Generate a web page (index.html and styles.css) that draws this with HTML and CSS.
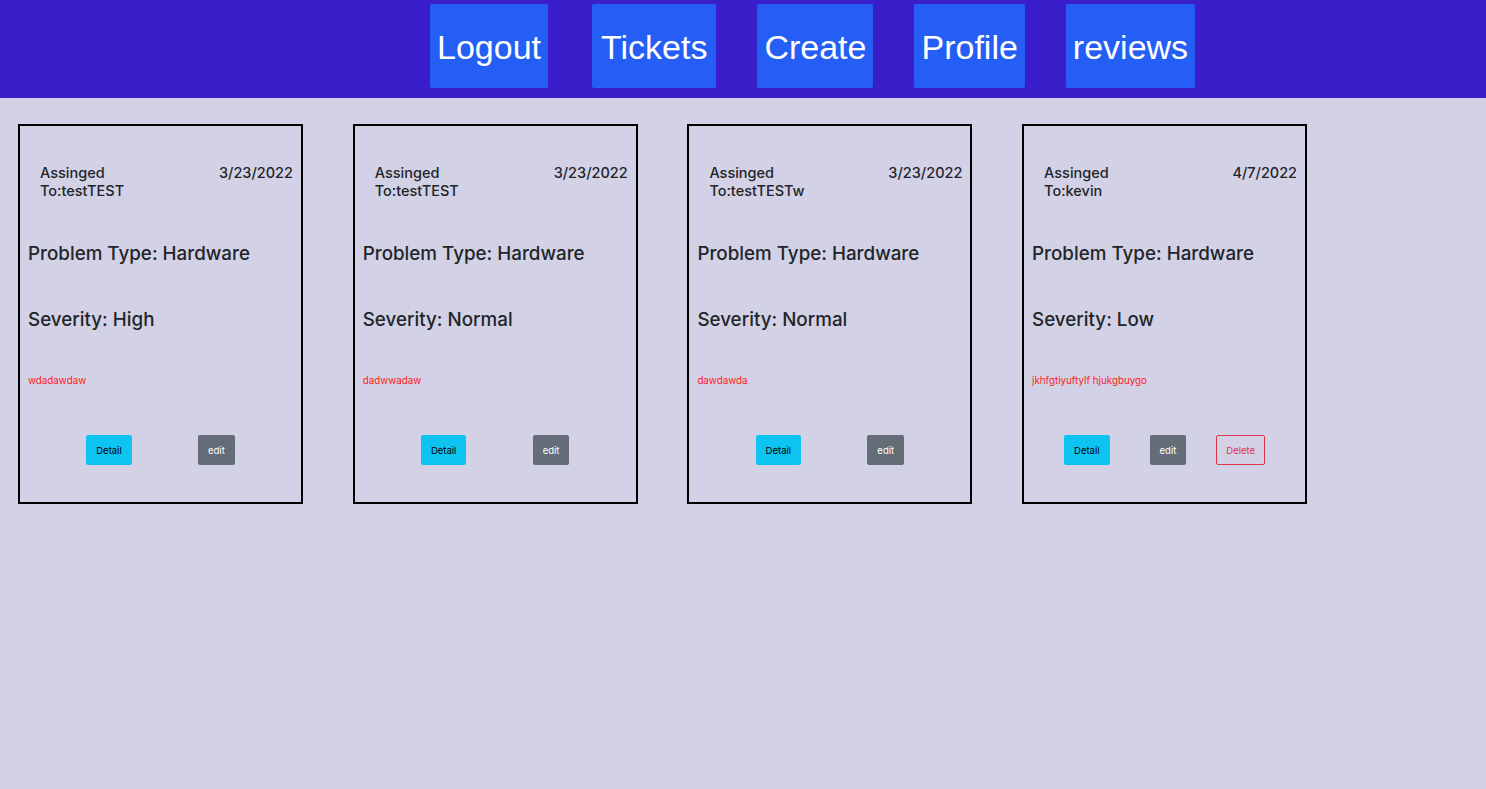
FILE: index.html
```html
<!DOCTYPE html>
<html>
<head>
<meta charset="utf-8">
<link rel="stylesheet" href="styles.css">
</head>
<body>
<nav class="nav">
  <a class="nav-btn">Logout</a>
  <a class="nav-btn nav-wide">Tickets</a>
  <a class="nav-btn">Create</a>
  <a class="nav-btn">Profile</a>
  <a class="nav-btn">reviews</a>
</nav>
<main class="cards">
  <div class="card">
    <div class="card-head"><span class="assigned">Assinged To:testTEST</span><span class="date">3/23/2022</span></div>
    <h4 class="field">Problem Type: Hardware</h4>
    <h4 class="field sev">Severity: High</h4>
    <p class="desc">wdadawdaw</p>
    <div class="actions"><button class="btn btn-info">Detail</button><button class="btn btn-sec">edit</button></div>
  </div>
  <div class="card">
    <div class="card-head"><span class="assigned">Assinged To:testTEST</span><span class="date">3/23/2022</span></div>
    <h4 class="field">Problem Type: Hardware</h4>
    <h4 class="field sev">Severity: Normal</h4>
    <p class="desc">dadwwadaw</p>
    <div class="actions"><button class="btn btn-info">Detail</button><button class="btn btn-sec">edit</button></div>
  </div>
  <div class="card">
    <div class="card-head"><span class="assigned">Assinged To:testTESTw</span><span class="date">3/23/2022</span></div>
    <h4 class="field">Problem Type: Hardware</h4>
    <h4 class="field sev">Severity: Normal</h4>
    <p class="desc">dawdawda</p>
    <div class="actions"><button class="btn btn-info">Detail</button><button class="btn btn-sec">edit</button></div>
  </div>
  <div class="card">
    <div class="card-head"><span class="assigned">Assinged To:kevin</span><span class="date">4/7/2022</span></div>
    <h4 class="field">Problem Type: Hardware</h4>
    <h4 class="field sev">Severity: Low</h4>
    <p class="desc">jkhfgtiyuftylf hjukgbuygo</p>
    <div class="actions"><button class="btn btn-info">Detail</button><button class="btn btn-sec">edit</button><button class="btn btn-del">Delete</button></div>
  </div>
</main>
</body>
</html>
```
FILE: styles.css
```css
* { box-sizing: border-box; }
html, body { margin: 0; padding: 0; }
body {
  background: #d3d1e6;
  font-family: Inter, "Noto Sans", sans-serif;
  color: #212529;
  min-height: 789px;
}
.nav {
  height: 99px;
  background: #381fc9;
  display: flex;
  align-items: flex-start;
  gap: 41px;
  padding: 4px 0 0 430px;
  border-bottom: 1px solid #d0cce8;
}
.nav-btn {
  height: 84px;
  display: flex;
  align-items: center;
  padding: 3px 7px 0;
  background: #245ef5;
  border-radius: 2px;
  color: #fff;
  font-family: "Liberation Sans", Arial, sans-serif;
  font-size: 34px;
}
.nav-btn:first-child { margin-right: 3px; }
.nav-wide { padding: 3px 9px 0; }
.cards {
  display: flex;
  gap: 49.7px;
  padding: 25px 0 0 18px;
}
.card {
  width: 285px;
  height: 380px;
  border: 2px solid #000;
  padding: 0 8px;
  display: flex;
  flex-direction: column;
}
.card-head {
  display: flex;
  justify-content: space-between;
  margin-top: 38px;
  padding: 0 0 0 12px;
  font-size: 14.5px;
  font-weight: 500;
  line-height: 18px;
}
.assigned { width: 105px; }
.field {
  margin: 42px 0 0;
  font-size: 18.8px;
  font-weight: 500;
  line-height: 24px;
}
.desc {
  margin: 43px 0 0;
  font-size: 9.8px;
  line-height: 12px;
  color: #ff1a1a;
}
.actions {
  margin: 48px -8px 0;
  display: flex;
  justify-content: space-evenly;
}
.btn {
  height: 30px;
  padding: 0 9px;
  font-family: Inter, "Noto Sans", sans-serif;
  font-size: 9.5px;
  border-radius: 2px;
  border: 1px solid transparent;
}
.btn-info { background: #0dc3ef; color: #000; }
.btn-sec { background: #646d77; color: #fff; }
.btn-del { background: transparent; color: #dc3545; border-color: #dc3545; margin-left: -10px; }
```
